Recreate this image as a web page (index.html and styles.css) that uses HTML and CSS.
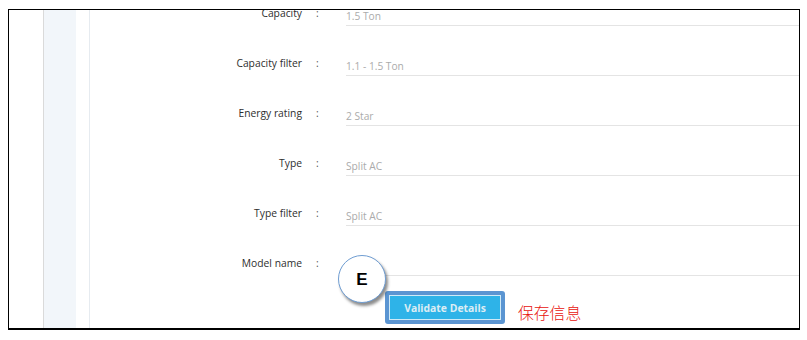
FILE: index.html
```html
<!DOCTYPE html>
<html>
<head>
<meta charset="utf-8">
<link rel="stylesheet" href="styles.css">
</head>
<body>
<div class="frame">
  <div class="gutter"></div>
  <div class="rail"></div>
  <div class="panel"></div>
  <div class="gap"></div>
  <div class="divider"></div>
  <div class="main">
    <div class="rows">
      <div class="row"><div class="label">Capacity</div><div class="colon">:</div><div class="value">1.5 Ton</div></div>
      <div class="row"><div class="label">Capacity filter</div><div class="colon">:</div><div class="value">1.1 - 1.5 Ton</div></div>
      <div class="row"><div class="label">Energy rating</div><div class="colon">:</div><div class="value">2 Star</div></div>
      <div class="row"><div class="label">Type</div><div class="colon">:</div><div class="value">Split AC</div></div>
      <div class="row"><div class="label">Type filter</div><div class="colon">:</div><div class="value">Split AC</div></div>
      <div class="row"><div class="label">Model name</div><div class="colon">:</div><div class="value"></div></div>
    </div>
    <div class="actions">
      <div class="highlight"><button class="btn">Validate Details</button></div>
      <span class="note">保存信息</span>
    </div>
  </div>
  <div class="badge">E</div>
</div>
</body>
</html>
```
FILE: styles.css
```css
html, body {
  margin: 0;
  padding: 0;
  background: #fff;
}
.frame {
  position: relative;
  margin: 9px 0 0 8px;
  width: 790px;
  height: 318px;
  border: 1px solid #000;
  border-bottom-width: 2px;
  display: flex;
  overflow: hidden;
  font-family: "Open Sans", "Liberation Sans", sans-serif;
}
.gutter { width: 34px; flex: none; }
.rail { width: 1px; flex: none; background: #dadada; }
.panel { width: 32px; flex: none; background: #f2f6fa; }
.gap { width: 13px; flex: none; }
.divider { width: 1px; flex: none; background: #e6ebf0; }
.main {
  flex: 1;
  display: flex;
  flex-direction: column;
}
.rows {
  margin-top: -34px;
}
.row {
  height: 50px;
  display: flex;
  align-items: flex-end;
}
.label {
  width: 212px;
  flex: none;
  text-align: right;
  font-size: 10.3px;
  line-height: 14px;
  font-weight: 500;
  color: #2e2e2e;
  padding-bottom: 6px;
}
.colon {
  width: 30px;
  flex: none;
  padding-left: 14px;
  font-size: 10.3px;
  line-height: 14px;
  color: #555;
  padding-bottom: 6px;
}
.value {
  flex: 1;
  font-size: 10.2px;
  line-height: 14px;
  height: 14px;
  color: #ababab;
  padding-bottom: 2px;
  border-bottom: 1px solid #e4e4e4;
}
.actions {
  margin-top: 15px;
  padding-left: 295px;
  display: flex;
  align-items: center;
}
.highlight {
  border: 4px solid #5b95d2;
  border-radius: 3px;
  display: flex;
}
.btn {
  width: 112px;
  height: 25px;
  margin: 0;
  padding: 0;
  background: #2eb3e8;
  border: 1px solid #cfeaf7;
  color: #dcedf4;
  font-family: "Open Sans", "Liberation Sans", sans-serif;
  font-weight: 700;
  font-size: 10.4px;
  line-height: 22px;
  text-align: center;
}
.note {
  margin-left: 13px;
  margin-top: 10px;
  font-family: "Noto Sans CJK SC", sans-serif;
  font-size: 15.8px;
  font-weight: 300;
  color: #e8120c;
  line-height: 18px;
}
.badge {
  position: absolute;
  left: 329px;
  top: 245px;
  width: 48px;
  height: 48px;
  border: 1.5px solid #6f9dd2;
  border-radius: 50%;
  background: #fff;
  box-shadow: 2px 3px 3px rgba(0,0,0,0.45);
  display: flex;
  align-items: center;
  justify-content: center;
  font-family: "Liberation Sans", Arial, sans-serif;
  font-weight: bold;
  font-size: 17px;
  color: #000;
  padding-top: 2px;
  box-sizing: border-box;
}
```
